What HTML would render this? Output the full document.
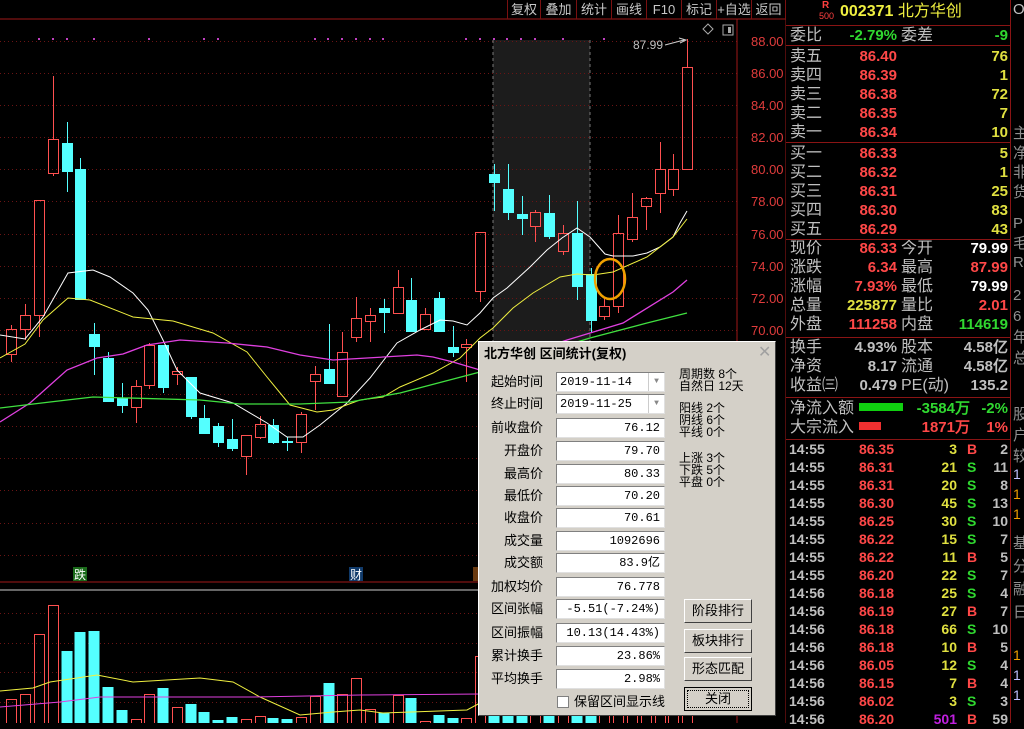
<!DOCTYPE html>
<html><head><meta charset="utf-8">
<style>
*{margin:0;padding:0;box-sizing:border-box}
body{width:1024px;height:723px;background:#000;overflow:hidden;position:relative;font-family:"Liberation Sans","Noto Sans CJK SC",sans-serif}
.a{position:absolute;white-space:nowrap}
.tb{position:absolute;top:0;height:19px;color:#c8c8c8;font-size:13px;line-height:19px;text-align:center;border-left:1px solid #7a1010}
.rp{position:absolute;font-size:15px;line-height:19px;white-space:nowrap}
.g{color:#c0c0c0}.r{color:#ff4848}.y{color:#e0e040}.gr{color:#30d830}.w{color:#fff}
.n{font-weight:bold;font-family:"Liberation Sans",sans-serif}
.hl{position:absolute;left:786px;width:224px;height:1px;background:#8a1414}
.dlg{position:absolute;left:478px;top:341px;width:298px;height:375px;background:#d4d0c8;border:1px solid #fff;border-right-color:#404040;border-bottom-color:#404040;font-family:"Liberation Sans","Noto Sans CJK SC",sans-serif;color:#000}
.lb{position:absolute;font-size:13px;right:232px;text-align:right;line-height:20px}
.in{position:absolute;left:77px;width:109px;height:20px;background:#fff;border:1px solid #808080;border-right-color:#e0e0e0;border-bottom-color:#e0e0e0;font-family:"Liberation Mono",monospace;font-size:12px;line-height:18px;text-align:right;padding-right:4px}
.bt{position:absolute;left:205px;width:68px;height:24px;border:1px solid #fff;border-right-color:#404040;border-bottom-color:#404040;font-size:13px;line-height:22px;text-align:center}
.sm{position:absolute;left:200px;font-size:12px;line-height:12px}
</style></head><body>
<svg id="c" width="786" height="723" style="position:absolute;left:0;top:0">
<rect x="493" y="40" width="97" height="542" fill="#1c1c1c"/>
<g id="grid"></g>
<line x1="493" y1="40" x2="493" y2="582" stroke="#777" stroke-dasharray="3,3"/>
<line x1="590" y1="40" x2="590" y2="582" stroke="#777" stroke-dasharray="3,3"/>
<line x1="0" y1="19" x2="786" y2="19" stroke="#a01818"/>
<line x1="737" y1="19" x2="737" y2="723" stroke="#a01818"/>
<line x1="786" y1="0" x2="786" y2="723" stroke="#a01818"/>
<line x1="0" y1="582" x2="737" y2="582" stroke="#a01818"/>
<line x1="0" y1="590" x2="737" y2="590" stroke="#ccc"/>
<g id="cd"></g>
<polyline fill="none" stroke="#fff" stroke-width="1" points="0,335 25,339 43,317 68,273 93,270 110,277 133,293 148,310 163,340 177,370 200,393 233,403 267,423 287,437 303,437 320,425 347,403 370,378 397,343 420,330 440,320 453,321 467,325 480,313 493,298 507,288 530,267 547,250 562,238 577,228 590,237 605,254 613,256 633,256 647,253 660,247 673,237 680,223 687,211"/>
<polyline fill="none" stroke="#f0f040" stroke-width="1" points="0,358 25,344 43,320 68,298 90,300 133,317 173,321 213,333 247,352 267,377 290,405 317,412 333,410 360,400 383,397 400,387 433,373 460,358 480,338 493,328 513,308 533,293 560,277 577,274 593,275 613,272 647,257 673,237 687,219"/>
<polyline fill="none" stroke="#e040e0" stroke-width="1.3" points="0,422 30,403 67,370 97,358 123,354 147,345 180,340 227,343 267,347 300,355 333,360 367,358 417,355 433,357 453,362 480,370 567,340 623,323 673,292 687,280"/>
<polyline fill="none" stroke="#40e040" stroke-width="1.3" points="0,408 50,402 93,397 200,400 240,404 300,404 350,402 400,393 480,372 590,338 647,323 687,313"/>
<polyline fill="none" stroke="#f0f040" stroke-width="1" points="0,691 33,688 50,682 97,675 133,682 200,678 233,682 260,697 300,715 333,712 360,710 383,713 467,710 480,703"/>
<polyline fill="none" stroke="#e040e0" stroke-width="1" points="0,707 60,702 100,697 253,697 360,695 480,694"/>
<ellipse cx="610" cy="279" rx="15" ry="20" fill="none" stroke="#f0a000" stroke-width="2.5"/>
<text x="633" y="49" fill="#c0c0c0" font-size="12" font-family="Liberation Sans">87.99</text>
<path d="M665 45 L684 40 M679 38 L686 40 L680 43" stroke="#ccc" fill="none"/>
<path d="M708 24 L713 29 L708 34 L703 29 Z" stroke="#aaa" fill="none"/>
<rect x="723" y="25" width="10" height="10" fill="none" stroke="#aaa"/><rect x="728" y="27" width="3" height="6" fill="#aaa"/>
<rect x="73" y="567" width="14" height="14" fill="#1a6a1a"/><text x="74" y="579" fill="#fff" font-size="12" font-family="Noto Sans CJK SC">跌</text>
<rect x="349" y="567" width="14" height="14" fill="#103a6a"/><text x="350" y="579" fill="#fff" font-size="12" font-family="Noto Sans CJK SC">财</text>
<rect x="473" y="567" width="7" height="14" fill="#6a3a10"/>
<g font-family="Liberation Sans" font-size="13" fill="#e03c3c">
<text x="751" y="46">88.00</text><text x="751" y="78">86.00</text><text x="751" y="110">84.00</text><text x="751" y="142">82.00</text><text x="751" y="174">80.00</text><text x="751" y="206">78.00</text><text x="751" y="239">76.00</text><text x="751" y="271">74.00</text><text x="751" y="303">72.00</text><text x="751" y="335">70.00</text>
</g>
</svg>
<script>
(function(){
var ns="http://www.w3.org/2000/svg",g=document.getElementById('grid'),cd=document.getElementById('cd');
function el(t,a,p){var e=document.createElementNS(ns,t);for(var k in a)e.setAttribute(k,a[k]);(p||cd).appendChild(e);}
for(var y=41;y<580;y+=32.1)el('line',{x1:0,y1:Math.round(y)+.5,x2:737,y2:Math.round(y)+.5,stroke:'#6a1414','stroke-dasharray':'1,3'},g);
[613,643,672,702].forEach(function(y){el('line',{x1:0,y1:y+.5,x2:737,y2:y+.5,stroke:'#6a1414','stroke-dasharray':'1,3'},g);});
[39,53,67,94,149,204,218,315,328,342,356,370,383,466,480,494,507,521,535,563,604].forEach(function(x){el('rect',{x:x-1,y:38,width:2,height:2,fill:'#c040c0'},g);});
var R='#ff5050',C='#54ffff';
var d=[[0,'r',325,329,354,362],[1,'r',304,315,329,340],[2,'r',200,200,315,337],[3,'r',76,139,173,176],[4,'c',122,143,172,192],[5,'c',158,169,300,300],[6,'c',323,334,347,375],[7,'c',352,358,402,402],[8,'c',383,398,406,413],[9,'r',380,386,407,423],[10,'r',343,345,385,389],[11,'c',345,345,388,393],[12,'r',367,371,374,385],[13,'c',377,377,417,419],[14,'c',405,418,434,434],[15,'c',423,426,443,447],[16,'c',419,439,449,451],[17,'r',435,435,456,475],[18,'r',416,424,437,439],[19,'c',419,425,443,444],[20,'c',437,441,443,451],[21,'r',412,414,442,453],[22,'r',366,374,381,410],[23,'c',324,369,384,384],[24,'r',332,352,396,396],[25,'r',297,318,337,342],[26,'r',308,315,321,342],[27,'c',299,308,313,333],[28,'r',270,287,313,313],[29,'c',278,300,332,332],[30,'r',308,314,329,329],[31,'c',292,298,332,332],[32,'c',326,347,353,357],[33,'r',339,344,347,382],[34,'r',232,232,291,302],[35,'c',164,174,183,211],[36,'c',164,189,213,220],[37,'c',196,214,219,235],[38,'r',210,212,226,242],[39,'c',195,213,237,239],[40,'r',225,233,251,255],[41,'c',201,233,287,300],[42,'c',268,274,321,333],[43,'r',298,306,316,320],[44,'r',215,233,306,313],[45,'r',193,217,239,242],[46,'r',197,198,206,230],[47,'r',142,169,193,213],[48,'r',154,169,189,196],[49,'r',39,67,169,169]];
d.forEach(function(c){var x=Math.round(11.4+13.79*c[0])+.5;
 if(c[1]=='r'){ if(c[2]<c[3])el('line',{x1:x,y1:c[2],x2:x,y2:c[3],stroke:R});if(c[5]>c[4])el('line',{x1:x,y1:c[4],x2:x,y2:c[5],stroke:R});el('rect',{x:x-5,y:c[3]+.5,width:10,height:Math.max(1,c[4]-c[3]),fill:'none',stroke:R});}
 else{el('line',{x1:x,y1:c[2],x2:x,y2:c[5],stroke:C});el('rect',{x:x-5.5,y:c[3],width:11,height:Math.max(2,c[4]-c[3]),fill:C});}
});
var v=[[0,'r',699],[1,'r',694],[2,'r',634],[3,'r',605],[4,'c',651],[5,'c',632],[6,'c',631],[7,'c',687],[8,'c',710],[9,'r',719],[10,'r',694],[11,'c',688],[12,'r',707],[13,'c',704],[14,'c',712],[15,'c',720],[16,'c',717],[17,'r',719],[18,'r',716],[19,'c',718],[20,'c',719],[21,'r',717],[22,'r',696],[23,'c',683],[24,'r',694],[25,'r',678],[26,'r',709],[27,'c',713],[28,'r',695],[29,'c',698],[30,'r',721],[31,'c',715],[32,'c',718],[33,'r',718],[34,'r',656],[35,'c',690],[36,'c',690],[37,'c',700],[38,'r',700],[39,'c',695],[40,'r',700],[41,'c',670],[42,'c',660],[43,'r',700],[44,'r',660],[45,'r',690],[46,'r',700],[47,'r',680],[48,'r',690],[49,'r',640]];
v.forEach(function(b){var x=Math.round(11.4+13.79*b[0]);
 if(b[1]=='r')el('rect',{x:x-5+.5,y:b[2]+.5,width:10,height:730-b[2],fill:'none',stroke:R});else el('rect',{x:x-5.5,y:b[2],width:11,height:730-b[2],fill:C});});
})();
</script>

<div class="tb" style="left:507px;width:33px">复权</div>
<div class="tb" style="left:540px;width:36px">叠加</div>
<div class="tb" style="left:576px;width:35px">统计</div>
<div class="tb" style="left:611px;width:35px">画线</div>
<div class="tb" style="left:646px;width:35px">F10</div>
<div class="tb" style="left:681px;width:35px">标记</div>
<div class="tb" style="left:716px;width:35px">+自选</div>
<div class="tb" style="left:751px;width:35px;border-right:1px solid #7a1010">返回</div>

<!-- right panel -->
<div style="position:absolute;left:1010px;top:0;width:1px;height:723px;background:#8a1414"></div>
<div class="a" style="left:822px;top:1px;font-size:10px;color:#ff4040;font-weight:bold;line-height:10px">R</div>
<div class="a" style="left:819px;top:11px;font-size:9px;color:#ff4040;line-height:10px">500</div>
<div class="a" style="left:840px;top:2px;font-size:16px;line-height:20px;color:#f0f040"><b>002371</b> 北方华创</div>
<div class="hl" style="top:25px"></div>
<div class="rp g" style="left:790px;top:26px;font-size:16px">委比</div>
<div class="rp gr n" style="left:800px;top:26px;width:97px;text-align:right">-2.79%</div>
<div class="rp g" style="left:901px;top:26px;font-size:16px">委差</div>
<div class="rp gr n" style="left:950px;top:26px;width:58px;text-align:right">-9</div>
<div class="hl" style="top:45px"></div>
<div id="ob"></div>
<div class="hl" style="top:142px"></div>
<div class="hl" style="top:239px"></div>
<div class="hl" style="top:337px"></div>
<div class="hl" style="top:397px"></div>
<div class="hl" style="top:439px"></div>
<div style="position:absolute;left:859px;top:403px;width:44px;height:8px;background:#10d010"></div>
<div style="position:absolute;left:859px;top:422px;width:22px;height:8px;background:#f03030"></div>
<script>
(function(){
var h='';
function row(t,l1,v1,c1,l2,v2,c2){h+='<div class="rp g" style="left:790px;top:'+t+'px;font-size:16px">'+l1+'</div><div class="rp n '+c1+'" style="left:800px;top:'+t+'px;width:97px;text-align:right">'+v1+'</div>';
 if(l2)h+='<div class="rp g" style="left:901px;top:'+t+'px;font-size:16px">'+l2+'</div>';
 h+='<div class="rp n '+c2+'" style="left:930px;top:'+t+'px;width:78px;text-align:right">'+v2+'</div>';}
var ob=[['卖五','86.40','76'],['卖四','86.39','1'],['卖三','86.38','72'],['卖二','86.35','7'],['卖一','86.34','10']];
ob.forEach(function(o,i){row(47+i*19,o[0],o[1],'r','',o[2],'y');});
var bb=[['买一','86.33','5'],['买二','86.32','1'],['买三','86.31','25'],['买四','86.30','83'],['买五','86.29','43']];
bb.forEach(function(o,i){row(144+i*19,o[0],o[1],'r','',o[2],'y');});
row(239,'现价','86.33','r','今开','79.99','w');
row(258,'涨跌','6.34','r','最高','87.99','r');
row(277,'涨幅','7.93%','r','最低','79.99','w');
row(296,'总量','225877','y','量比','2.01','r');
row(315,'外盘','111258','r','内盘','114619','gr');
row(338,'换手','4.93%','g','股本','4.58亿','g');
row(357,'净资','8.17','g','流通','4.58亿','g');
row(376,'收益㈢','0.479','g','PE(动)','135.2','g');
h+='<div class="rp g" style="left:790px;top:399px;font-size:16px">净流入额</div><div class="rp gr n" style="left:880px;top:399px;width:90px;text-align:right">-3584万</div><div class="rp gr n" style="left:970px;top:399px;width:38px;text-align:right">-2%</div>';
h+='<div class="rp g" style="left:790px;top:418px;font-size:16px">大宗流入</div><div class="rp r n" style="left:880px;top:418px;width:90px;text-align:right">1871万</div><div class="rp r n" style="left:970px;top:418px;width:38px;text-align:right">1%</div>';
var tk=[['14:55','86.35','3','B','2'],['14:55','86.31','21','S','11'],['14:55','86.31','20','S','8'],['14:55','86.30','45','S','13'],['14:55','86.25','30','S','10'],['14:55','86.22','15','S','7'],['14:55','86.22','11','B','5'],['14:55','86.20','22','S','7'],['14:56','86.18','25','S','4'],['14:56','86.19','27','B','7'],['14:56','86.18','66','S','10'],['14:56','86.18','10','B','5'],['14:56','86.05','12','S','4'],['14:56','86.15','7','B','4'],['14:56','86.02','3','S','3'],['14:56','86.20','501','B','59']];
tk.forEach(function(t,i){var y=440+i*18;
 h+='<div class="rp g n" style="left:789px;top:'+y+'px;font-size:14px">'+t[0]+'</div><div class="rp r n" style="left:840px;top:'+y+'px;width:54px;text-align:right;font-size:14px">'+t[1]+'</div><div class="rp n '+(i==15?'':'y')+'" style="left:920px;top:'+y+'px;width:37px;text-align:right;font-size:14px;'+(i==15?'color:#c020e0':'')+'">'+t[2]+'</div><div class="rp n '+(t[3]=='B'?'r':'gr')+'" style="left:967px;top:'+y+'px;font-size:14px">'+t[3]+'</div><div class="rp g n" style="left:980px;top:'+y+'px;width:28px;text-align:right;font-size:14px">'+t[4]+'</div>';});
document.getElementById('ob').innerHTML=h;
})();
</script>
<div class="a g" style="left:1013px;top:0;font-size:15px;line-height:19px">O</div>
<div class="a" style="left:1013px;top:124px;font-size:15px;line-height:19.5px;color:#909090;white-space:normal;width:14px">主<br>净<br>非<br>货</div>
<div class="a" style="left:1013px;top:214px;font-size:15px;line-height:19.5px;color:#909090;white-space:normal;width:14px">P<br>毛<br>R</div>
<div class="a" style="left:1013px;top:285px;font-size:15px;line-height:21px;color:#909090;white-space:normal;width:14px">2<br>6<br>年<br>总</div>
<div class="a" style="left:1013px;top:404px;font-size:15px;line-height:21px;color:#909090;white-space:normal;width:14px">股<br>户<br>较</div>
<div class="a" style="left:1013px;top:464px;font-size:14px;line-height:20px;color:#c0c0ff;white-space:normal;width:14px">1<br><span style="color:#f0a000">1</span><br><span style="color:#f0a000">1</span></div>
<div class="a" style="left:1013px;top:532px;font-size:15px;line-height:23px;color:#909090;white-space:normal;width:14px">基<br>分<br>融<br>日</div>
<div class="a" style="left:1013px;top:645px;font-size:14px;line-height:20px;color:#c0c0ff;white-space:normal;width:14px"><span style="color:#f0a000">1</span><br>1<br>1</div>

<!-- dialog -->
<div class="dlg">
<div class="a" style="left:5px;top:3px;font-size:13px;font-weight:bold;line-height:18px">北方华创 区间统计(复权)</div>
<div class="a" style="left:279px;top:2px;font-size:16px;color:#a0a0a0;line-height:18px">✕</div>
<div class="lb" style="top:30px">起始时间</div><div class="in" style="top:30px;text-align:left;padding-left:3px">2019-11-14<span style="position:absolute;right:0;top:0;width:16px;height:18px;border-left:1px solid #ccc;text-align:center;color:#888;font-size:8px">▼</span></div>
<div class="lb" style="top:52px">终止时间</div><div class="in" style="top:52px;text-align:left;padding-left:3px">2019-11-25<span style="position:absolute;right:0;top:0;width:16px;height:18px;border-left:1px solid #ccc;text-align:center;color:#888;font-size:8px">▼</span></div>
<div class="lb" style="top:76px">前收盘价</div><div class="in" style="top:76px">76.12</div>
<div class="lb" style="top:99px">开盘价</div><div class="in" style="top:99px">79.70</div>
<div class="lb" style="top:122px">最高价</div><div class="in" style="top:122px">80.33</div>
<div class="lb" style="top:144px">最低价</div><div class="in" style="top:144px">70.20</div>
<div class="lb" style="top:166px">收盘价</div><div class="in" style="top:166px">70.61</div>
<div class="lb" style="top:189px">成交量</div><div class="in" style="top:189px">1092696</div>
<div class="lb" style="top:211px">成交额</div><div class="in" style="top:211px">83.9亿</div>
<div class="lb" style="top:235px">加权均价</div><div class="in" style="top:235px">76.778</div>
<div class="lb" style="top:257px">区间张幅</div><div class="in" style="top:257px">-5.51(-7.24%)</div>
<div class="lb" style="top:281px">区间振幅</div><div class="in" style="top:281px">10.13(14.43%)</div>
<div class="lb" style="top:304px">累计换手</div><div class="in" style="top:304px">23.86%</div>
<div class="lb" style="top:327px">平均换手</div><div class="in" style="top:327px">2.98%</div>
<div class="a" style="left:78px;top:354px;width:12px;height:12px;background:#fff;border:1px solid #808080"></div>
<div class="a" style="left:95px;top:351px;font-size:13px;line-height:18px">保留区间显示线</div>
<div class="sm" style="top:26px">周期数 8个<br>自然日 12天</div>
<div class="sm" style="top:60px">阳线 2个<br>阴线 6个<br>平线 0个</div>
<div class="sm" style="top:110px">上涨 3个<br>下跌 5个<br>平盘 0个</div>
<div class="bt" style="top:257px">阶段排行</div>
<div class="bt" style="top:287px">板块排行</div>
<div class="bt" style="top:315px">形态匹配</div>
<div class="bt" style="top:345px;border:1px solid #000"><div style="margin:2px;border:1px dotted #000;line-height:16px">关闭</div></div>
</div>
</body></html>
